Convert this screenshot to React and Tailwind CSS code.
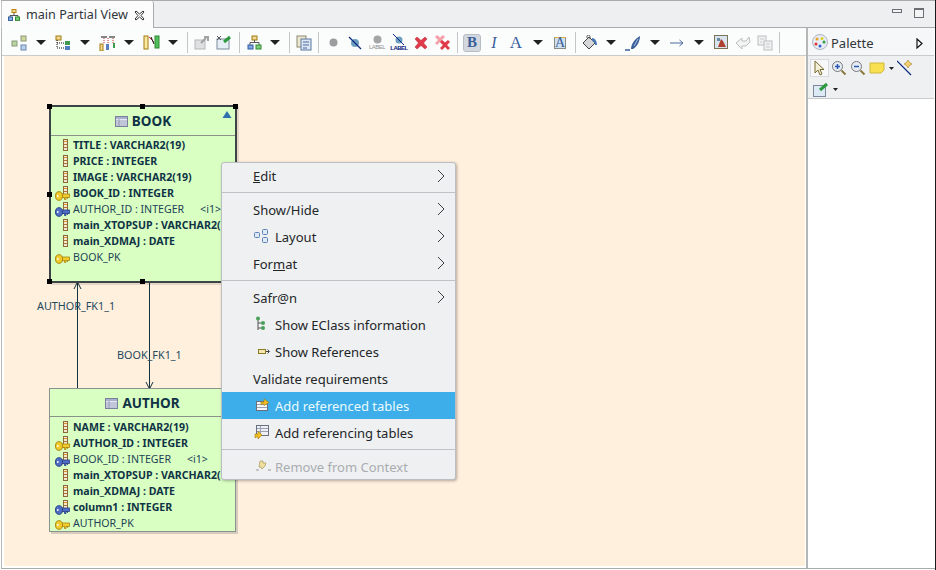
import React from "react";

const font = { fontFamily: '"Noto Sans", sans-serif' };
const serif = { fontFamily: '"Liberation Serif", serif' };
const sans = { fontFamily: '"Liberation Sans", sans-serif' };

function Caret({ className = "" }) {
  return (
    <div className={`w-[22px] h-[22px] flex items-center justify-center ${className}`}>
      <svg width="11" height="6" viewBox="0 0 11 6"><path d="M0 0h10L5 5z" fill="#222" /></svg>
    </div>
  );
}
function Sep({ w = "w-[7px]" }) {
  return (
    <div className={`${w} flex justify-center`}>
      <div className="w-px h-[21px] bg-[#c4c6c8]" />
    </div>
  );
}
function Btn({ children, active }) {
  return (
    <div className="w-[22px] h-[22px] flex items-center justify-center">
      {active ? (
        <div className="w-[18px] h-[18px] rounded-[3px] bg-[#d3d8de] border border-[#b7bdc4] flex items-center justify-center">{children}</div>
      ) : children}
    </div>
  );
}
const S = ({ children, w = 16, h = 16 }) => (
  <svg width={w} height={h} viewBox={`0 0 ${w} ${h}`} fill="none">{children}</svg>
);

function ColIcon() {
  return (
    <svg width="5" height="12" viewBox="0 0 5 12" className="shrink-0">
      <rect x="0.500" y="0.500" width="4" height="11" fill="#f2e9cf" stroke="#8a6a3a" />
      <path d="M1 2.500h3" stroke="#e0902a" />
      <path d="M1 5.500h3M1 8.500h3" stroke="#b0703a" />
    </svg>
  );
}
function Key({ color = "#f2cc2c", edge = "#a88510" }) {
  return (
    <svg width="15" height="10" viewBox="0 0 15 10">
      <rect x="6" y="3" width="8.500" height="3.500" fill={color} stroke={edge} strokeWidth="0.800" />
      <path d="M9.500 6.500v2h1.500v-2M12.500 6.500v1.500" fill={color} stroke={edge} strokeWidth="0.800" />
      <ellipse cx="4" cy="5" rx="3.500" ry="4.300" fill={color} stroke={edge} />
      <circle cx="2.800" cy="5" r="0.900" fill="#fff" />
    </svg>
  );
}
function RowIcon({ type }) {
  return (
    <div className="relative w-[19px] h-4 shrink-0">
      {type !== "pk" && (
        <div className={`absolute left-[9px] ${type === "col" ? "top-[1px]" : "top-0"}`}><ColIcon /></div>
      )}
      {type === "key" && (
        <div className="absolute left-[1px] top-[5px]"><Key /></div>
      )}
      {type === "pk" && (
        <div className="absolute left-[1px] top-[4px]"><Key /></div>
      )}
      {type === "fk" && (
        <div className="absolute left-[1px] top-[5px]"><Key color="#4f6fc4" edge="#27408a" /></div>
      )}
    </div>
  );
}
function Row({ type, text, bold, extra }) {
  return (
    <div className={`h-4 flex items-center whitespace-nowrap text-[10.6px] ${bold ? "text-[#0f3345]" : "text-[#1d4256]"}`}>
      <RowIcon type={type} />
      <span className={bold ? "font-bold" : ""}>{text}</span>
      {extra && <span className="ml-[16px]">{extra}</span>}
    </div>
  );
}
function TableGlyph() {
  return (
    <svg width="13" height="11" viewBox="0 0 13 11">
      <rect x="0.500" y="0.500" width="12" height="10" fill="#e6e9f4" stroke="#7a7f9a" />
      <rect x="1" y="1" width="11" height="2" fill="#a8b0d0" />
      <path d="M1 5h11M1 7h11M1 9h11M4 3v7" stroke="#8a90b0" strokeWidth="0.800" />
    </svg>
  );
}
function Handle({ className }) {
  return <div className={`absolute w-[5px] h-[5px] bg-black ${className}`} />;
}

function MenuItem({ label, icon, arrow, active, disabled, first, iconClass = "" }) {
  return (
    <div className={`${first ? "h-[26px]" : "h-[27px]"} flex items-center relative whitespace-nowrap text-[13px] pt-[2px] ${active ? "bg-[#3daee9] text-[#eafaff]" : disabled ? "text-[#a9adb1]" : "text-[#232629]"}`}>
      {icon ? (
        <>
          <div className={`absolute left-[31px] top-[5px] w-4 h-4 flex items-center justify-center ${iconClass}`}>{icon}</div>
          <span className="ml-[53px]">{label}</span>
        </>
      ) : (
        <span className="ml-[31px]">{label}</span>
      )}
      {arrow && (
        <svg className="absolute left-[215px] top-[6px]" width="8" height="14" viewBox="0 0 8 14" fill="none">
          <path d="M1 1l6 6-6 6" stroke="#3a3f44" strokeWidth="1" />
        </svg>
      )}
    </div>
  );
}
const MenuSep = () => <div className="h-px bg-[#bfc3c7] my-[3px]" />;

export default function App() {
  return (
    <div className="w-[936px] h-[570px] flex flex-col bg-white overflow-hidden border-r border-[#1a1a1a] pb-[1px] pl-[1px]" style={font}>
      {/* Tab strip */}
      <div className="h-[28px] flex bg-[#eeeff1] border-t border-b border-[#a9abad] shrink-0 relative">
        <div className="w-[153px] h-[27px] bg-[#fcfcfc] border-r border-[#a9abad] border-l border-l-[#c4c6c8] rounded-tr-[3px] flex items-center relative z-10 pt-[1px]">
          <svg className="ml-[6px]" width="12" height="12" viewBox="0 0 12 12" fill="none">
            <rect x="4" y="0.500" width="4" height="3" fill="#f0d890" stroke="#b8860b" />
            <path d="M6 4v2.500M2 8V6.500h8V8" stroke="#555" />
            <rect x="0.500" y="8" width="4" height="3.400" fill="#8fb4e0" stroke="#2f5d9e" />
            <rect x="7.500" y="8" width="4" height="3.400" fill="#7fcf7f" stroke="#2e8b2e" />
          </svg>
          <span className="ml-[6px] text-[12.6px] text-[#31363b]">main Partial View</span>
          <svg className="ml-[6px]" width="11" height="11" viewBox="0 0 11 11" fill="none">
            <path d="M1 2l1-1 3.500 3L9 1l1 1-3 3.500 3 3.500-1 1-3.500-3L2 10 1 9l3-3.500z" fill="#fff" stroke="#333" strokeWidth="1" />
          </svg>
        </div>
        <div className="flex-1 flex justify-end items-start pt-[7px] pr-[11px] gap-[12px]">
          <div className="w-[10px] h-[4px] border border-[#6b6f73] bg-[#f4f4f4] mt-[1px]" />
          <div className="w-[10px] h-[10px] border border-[#6b6f73] border-t-2 bg-[#f4f4f4]" />
        </div>
      </div>

      {/* Body */}
      <div className="flex-1 flex min-h-0 border-b border-[#a9abad]">
        {/* Editor column */}
        <div className="w-[807px] flex flex-col border-l border-[#b4b6b8] border-r-2 border-r-[#b4b6b8] shrink-0 pr-[1px]">
          <div className="h-[28px] bg-[#fbfcfc] border-b border-[#c9cbcd] flex items-center pl-[6px] pt-[2px] shrink-0 -mr-[1px]">
            <Btn>
              <S>
                <rect x="1" y="6" width="5" height="5" fill="#b7d39f" stroke="#8a9a7a" />
                <rect x="10" y="1" width="5" height="5" fill="#cfd79a" stroke="#8a9a7a" />
                <rect x="10" y="10" width="5" height="5" fill="#b9d2ee" stroke="#6a88aa" />
              </S>
            </Btn>
            <Caret />
            <Btn>
              <S>
                <rect x="1" y="1" width="5" height="4" fill="#f4d98e" stroke="#a07a10" />
                <path d="M2 5v8M2 8h8M2 13h8" stroke="#111" strokeDasharray="1 1" />
                <rect x="10" y="6" width="5" height="4" fill="#3f9a4f" />
                <rect x="10" y="11" width="5" height="4" fill="#4f7fc0" />
              </S>
            </Btn>
            <Caret />
            <Btn>
              <S w={17}>
                <path d="M2 2h6M10 2h6" stroke="#111" />
                <path d="M5 3v6M9 3v5M14 3v6" stroke="#d03030" strokeDasharray="1 1" />
                <rect x="1" y="9" width="3" height="7" fill="#f4d98e" stroke="#a07a10" />
                <rect x="7" y="9" width="3" height="6" fill="#5a7fc0" />
                <rect x="14" y="8" width="2" height="5" fill="#3f9a4f" />
              </S>
            </Btn>
            <Caret />
            <Btn>
              <S w={17}>
                <rect x="1" y="1" width="4" height="13" fill="#fbe9a0" stroke="#a07a10" />
                <rect x="12" y="1" width="4" height="12" fill="#50c060" stroke="#2e8b2e" />
                <path d="M6 2l5 5" stroke="#d03030" />
                <path d="M8 2l3 7" stroke="#111" />
              </S>
            </Btn>
            <Caret />
            <Sep />
            <Btn>
              <S>
                <rect x="1" y="5" width="10" height="9" fill="#dfe0e2" stroke="#b4b6b8" />
                <path d="M7 8l5-5M10 2h4v4" stroke="#a0a2a4" strokeWidth="2" />
              </S>
            </Btn>
            <Btn>
              <S>
                <rect x="1" y="4" width="12" height="10" fill="#e6eef6" stroke="#7a8a9a" />
                <path d="M1 1l4 4M5 1L1 5" stroke="#555" />
                <path d="M8 7l6-5" stroke="#2e9a3e" strokeWidth="3" />
              </S>
            </Btn>
            <Sep w="w-[8px]" />
            <Btn>
              <S w={15} h={15}>
                <rect x="5" y="1" width="5" height="4" fill="#f0d890" stroke="#a07a10" />
                <path d="M7.500 5v2.500M3 10V7.500h9V10" stroke="#555" />
                <rect x="1" y="10" width="5" height="4" fill="#7fa4e0" stroke="#2f5d9e" />
                <rect x="9" y="10" width="5" height="4" fill="#7fcf7f" stroke="#2e8b2e" />
              </S>
            </Btn>
            <Caret className="-ml-[1px]" />
            <Sep />
            <Btn>
              <S>
                <rect x="1" y="1" width="9" height="11" fill="#efe8d0" stroke="#8a8a70" />
                <rect x="5" y="4" width="10" height="11" fill="#dde6f4" stroke="#5a78a0" />
                <path d="M7 7h6M7 10h6M7 13h4" stroke="#4a6a9a" />
              </S>
            </Btn>
            <Sep />
            <Btn>
              <svg width="9" height="9"><circle cx="4.500" cy="4.500" r="4" fill="#9b9d9f" /></svg>
            </Btn>
            <Btn>
              <S w={14} h={14}>
                <circle cx="7" cy="7" r="4" fill="#6f9fc0" />
                <path d="M1 1l12 12" stroke="#0a2a80" strokeWidth="1.200" />
              </S>
            </Btn>
            <Btn>
              <div className="flex flex-col items-center">
                <svg width="9" height="9"><circle cx="4.500" cy="4.500" r="4" fill="#a3a5a7" /></svg>
                <span className="text-[6px] leading-[7px] tracking-[-0.5px] text-[#8f9193]" style={sans}>LABEL</span>
              </div>
            </Btn>
            <Btn>
              <div className="relative flex flex-col items-center">
                <svg width="14" height="11" viewBox="0 0 14 11">
                  <circle cx="7" cy="6" r="3.500" fill="#6f9fc0" />
                  <path d="M1 0l11 11" stroke="#0a2a80" />
                </svg>
                <span className="text-[6px] font-bold leading-[7px] tracking-[-0.5px] text-[#0a1a80]" style={sans}>LABEL</span>
              </div>
            </Btn>
            <Btn>
              <S w={14} h={14}>
                <path d="M3 1l4 3.500L11 1l2 2-3.500 4L13 11l-2 2-4-3.500L3 13l-2-2 3.500-4L1 3z" fill="#e0394a" stroke="#b82030" strokeWidth="0.500" />
              </S>
            </Btn>
            <Btn>
              <S w={16} h={16}>
                <path d="M2 0l3 2.500L8 0l2 2-3 3 3 3-2 2-3-3-3 3-2-2 3-3-3-3z" fill="#f4a0a8" />
                <path d="M7 5l3 2.500L13 5l2 2-3 3 3 3-2 2-3-3-3 3-2-2 3-3-3-3z" fill="#e0394a" />
              </S>
            </Btn>
            <Sep />
            <Btn active>
              <span className="text-[15px] font-bold text-[#3a5f9a] leading-none" style={serif}>B</span>
            </Btn>
            <Btn>
              <span className="text-[16px] italic text-[#3a5f9a] leading-none" style={serif}>I</span>
            </Btn>
            <Btn>
              <span className="text-[17px] text-[#3a5f9a] leading-none" style={serif}>A</span>
            </Btn>
            <Caret />
            <Btn>
              <div className="relative w-4 h-4">
                <div className="absolute left-[2px] top-[2px] w-3 h-3 bg-[#cfe0f0] border border-[#8a8a80] border-t-[#e0b040]" />
                <span className="absolute inset-0 text-[14px] text-[#3a5f9a] leading-4 text-center" style={serif}>A</span>
              </div>
            </Btn>
            <Sep w="w-[8px]" />
            <Btn>
              <S>
                <path d="M1 8l6-6 6 6-6 6z" fill="#d4d6d8" stroke="#444" />
                <path d="M5 3V1.500a1.500 1.500 0 013 0V4" stroke="#555" />
                <path d="M10 3c3 0 5 3 5 7l-2 0c0-2-1-4-3-4z" fill="#4a7ab8" />
              </S>
            </Btn>
            <Caret className="-ml-[1px]" />
            <Btn>
              <S>
                <path d="M6 14c0-5 4-10 9-13 0 5-3 11-7 13z" fill="#3a5f9a" />
                <path d="M9 11l4-7" stroke="#a8c0e0" />
                <path d="M0 15h5" stroke="#3a5f9a" strokeWidth="1.500" />
              </S>
            </Btn>
            <Caret />
            <Btn>
              <S w={14} h={8}><path d="M0 4h13M9.500 1l3.500 3-3.500 3" stroke="#4a6a9a" /></S>
            </Btn>
            <Caret />
            <Btn>
              <S w={15} h={15}>
                <rect x="0.500" y="0.500" width="13" height="13" fill="#d8e4ee" stroke="#7c7256" />
                <path d="M4 12l3-8 2 2 3 6z" fill="#b04030" />
                <path d="M3 3h3v3H3z" fill="#6a8aa0" />
              </S>
            </Btn>
            <Btn>
              <S>
                <path d="M1 8l6-5v3h4l3-4 1 5-4 4H7v3z" fill="#f3f3f3" stroke="#bbbdbf" />
              </S>
            </Btn>
            <Btn>
              <S>
                <rect x="1" y="1" width="8" height="9" fill="#f1f1f1" stroke="#bbbdbf" />
                <rect x="7" y="6" width="8" height="9" fill="#f1f1f1" stroke="#bbbdbf" />
                <path d="M3 4h4M3 7h2M9 9h4M9 12h4" stroke="#c8cacc" />
              </S>
            </Btn>
            <Sep />
          </div>

          {/* Canvas */}
          <div className="flex-1 relative bg-[#ffefdd] overflow-hidden ml-[2px] mb-[2px]">
            {/* connectors */}
            <svg className="absolute left-0 top-0" width="802" height="510" fill="none">
              <path d="M73.500 334V226" stroke="#143240" />
              <path d="M70 233l3.500-7 3.500 7" stroke="#143240" />
              <path d="M145.500 226V333" stroke="#143240" />
              <path d="M142 326l3.500 7 3.500-7" stroke="#143240" />
            </svg>
            <div className="absolute left-[33px] top-[242px] text-[10.8px] text-[#234a5c] whitespace-nowrap">AUTHOR_FK1_1</div>
            <div className="absolute left-[113px] top-[291px] text-[10.8px] text-[#234a5c] whitespace-nowrap">BOOK_FK1_1</div>

            {/* BOOK */}
            <div className="absolute left-[45px] top-[49px] w-[188px] h-[178px] bg-[#d9ffc3] border-2 border-[#3c4446] shadow-[2px_2px_0_rgba(0,0,0,0.1)]">
              <div className="h-[29px] border-b border-[#8a908a] flex items-center justify-center gap-[4px] relative">
                <TableGlyph />
                <span className="font-bold text-[13.5px] text-[#0f3345]">BOOK</span>
                <svg className="absolute right-[3px] top-[4px]" width="10" height="8" viewBox="0 0 10 8"><path d="M5 0l4.500 7H.500z" fill="#2f6fb0" /></svg>
              </div>
              <div className="pl-[3px] pt-[2px]">
                <Row type="col" bold text="TITLE : VARCHAR2(19)" />
                <Row type="col" bold text="PRICE : INTEGER" />
                <Row type="col" bold text="IMAGE : VARCHAR2(19)" />
                <Row type="key" bold text="BOOK_ID : INTEGER" />
                <Row type="fk" text="AUTHOR_ID : INTEGER" extra="<i1>" />
                <Row type="col" bold text="main_XTOPSUP : VARCHAR2(" />
                <Row type="col" bold text="main_XDMAJ : DATE" />
                <Row type="pk" text="BOOK_PK" />
              </div>
              <Handle className="-left-[4px] -top-[3px]" />
              <Handle className="left-[89px] -top-[3px]" />
              <Handle className="-right-[3px] -top-[3px]" />
              <Handle className="-left-[4px] top-[85px]" />
              <Handle className="-left-[4px] -bottom-[3px]" />
              <Handle className="left-[89px] -bottom-[3px]" />
              <Handle className="-right-[3px] -bottom-[3px]" />
            </div>

            {/* AUTHOR */}
            <div className="absolute left-[45px] top-[332px] w-[187px] h-[144px] bg-[#d9ffc3] border border-[#8a9290] shadow-[2px_2px_0_rgba(0,0,0,0.15)]">
              <div className="h-[28px] border-b border-[#8a908a] flex items-center justify-center gap-[4px] pt-[2px]">
                <TableGlyph />
                <span className="font-bold text-[13.5px] text-[#0f3345]">AUTHOR</span>
              </div>
              <div className="pl-[4px] pt-[3px]">
                <Row type="col" bold text="NAME : VARCHAR2(19)" />
                <Row type="key" bold text="AUTHOR_ID : INTEGER" />
                <Row type="fk" text="BOOK_ID : INTEGER" extra="<i1>" />
                <Row type="col" bold text="main_XTOPSUP : VARCHAR2(" />
                <Row type="col" bold text="main_XDMAJ : DATE" />
                <Row type="fk" bold text="column1 : INTEGER" />
                <Row type="pk" text="AUTHOR_PK" />
              </div>
            </div>

            {/* Context menu */}
            <div className="absolute left-[217px] top-[106px] w-[235px] h-[318px] bg-[#eff0f1] border border-[#bcbfc2] rounded-[3px] shadow-[1px_1px_3px_rgba(0,0,0,0.3)]">
              <MenuItem first label={<><span className="underline">E</span>dit</>} arrow />
              <MenuSep />
              <MenuItem label="Show/Hide" arrow />
              <MenuItem
                label="Layout"
                arrow
                icon={
                  <svg width="14" height="14" viewBox="0 0 14 14" fill="none" stroke="#5a82b4">
                    <rect x="0.500" y="3.500" width="5" height="5" rx="1" fill="#dfe8f4" />
                    <rect x="8.500" y="0.500" width="5" height="5" rx="1" fill="#dfe8f4" />
                    <rect x="8.500" y="8.500" width="5" height="5" rx="1" fill="#dfe8f4" />
                  </svg>
                }
              />
              <MenuItem label={<>For<span className="underline">m</span>at</>} arrow />
              <MenuSep />
              <MenuItem label="Safr@n" arrow />
              <MenuItem
                label="Show EClass information"
                icon={
                  <svg width="12" height="16" viewBox="0 0 12 16" fill="none">
                    <path d="M3 3v11M3 7h4M3 12h4" stroke="#555" />
                    <circle cx="3" cy="2.500" r="2" fill="#4aa05a" />
                    <circle cx="8" cy="7" r="2" fill="#4aa05a" />
                    <circle cx="8" cy="12" r="2" fill="#4aa05a" />
                  </svg>
                }
              />
              <MenuItem
                label="Show References"
                iconClass="ml-[3px]"
                icon={
                  <svg width="12" height="7" viewBox="0 0 12 7" fill="none">
                    <rect x="0.500" y="1.500" width="7" height="4" fill="#f4e8b0" stroke="#8a7a20" />
                    <path d="M8 3.500h3M9.500 1.500l2 2-2 2" stroke="#444" />
                  </svg>
                }
              />
              <MenuItem label="Validate requirements" />
              <MenuItem
                active
                label="Add referenced tables"
                iconClass="ml-[2px]"
                icon={
                  <svg width="14" height="14" viewBox="0 0 14 14" fill="none">
                    <rect x="0.500" y="3.500" width="11" height="9" fill="#f4f6fa" stroke="#6a7080" />
                    <path d="M1 6.500h10M1 9.500h10" stroke="#9aa0b0" />
                    <path d="M5 7V4h3V1l5 3.500-5 3V6H6z" fill="#f4c020" stroke="#a07a10" strokeWidth="0.600" />
                  </svg>
                }
              />
              <MenuItem
                label="Add referencing tables"
                icon={
                  <svg width="15" height="15" viewBox="0 0 15 15" fill="none">
                    <rect x="2.500" y="0.500" width="12" height="10" fill="#eef0f6" stroke="#6a7080" />
                    <path d="M3 3.500h11M3 6.500h11M6.500 1v9" stroke="#9aa0b0" />
                    <path d="M1 13V9h3V6l4 4-4 4v-2H2z" fill="#f4c020" stroke="#a07a10" strokeWidth="0.600" />
                  </svg>
                }
              />
              <MenuSep />
              <MenuItem
                disabled
                label="Remove from Context"
                iconClass="ml-[2px]"
                icon={
                  <svg width="15" height="12" viewBox="0 0 15 12" fill="none">
                    <path d="M4 1h3v2h3l-1 3 -3 3-1-2H3z" fill="#efe0a0" stroke="#a8985a" strokeWidth="0.700" />
                    <path d="M0 10h3M12 10h3" stroke="#999" />
                  </svg>
                }
              />
            </div>
          </div>
        </div>

        {/* Palette */}
        <div className="flex-1 flex flex-col bg-white">
          <div className="h-[28px] w-[126px] bg-[#f6f7f8] border-b border-[#c9cbcd] flex items-center pl-[4px] pt-[5px] shrink-0">
            <svg width="16" height="16" viewBox="0 0 16 16" className="-mt-[4px]">
              <circle cx="8" cy="8" r="7.500" fill="#e8ecf4" stroke="#b0b4c0" />
              <circle cx="5" cy="5" r="1.500" fill="#e8a020" />
              <circle cx="10" cy="4.500" r="1.500" fill="#e0d020" />
              <circle cx="12" cy="8" r="1.500" fill="#30a040" />
              <circle cx="4" cy="10" r="1.500" fill="#e03030" />
              <circle cx="8" cy="12" r="1.500" fill="#3060d0" />
            </svg>
            <span className="ml-[3px] text-[13px] text-[#31363b]">Palette</span>
            <svg className="ml-[42px] -mt-[2px]" width="7" height="11" viewBox="0 0 7 11"><path d="M1 1l5 4.500-5 4.500z" fill="#fff" stroke="#111" strokeWidth="1.200" /></svg>
          </div>
          <div className="bg-[#eff0f1] border-b border-[#c9cbcd] h-[43px] w-[126px] pt-[2px] pl-[2px] shrink-0">
            <div className="flex items-center h-[20px]">
              <div className="w-[19px] h-[18px] bg-[#f8f8f8] border border-[#d8dade] flex items-center justify-center">
                <svg width="11" height="16" viewBox="0 0 11 16"><path d="M1 1v12l3-3 2 5 2-1-2-4.500h4z" fill="#f4f1d8" stroke="#7a6a30" /></svg>
              </div>
              <svg className="ml-[2px]" width="16" height="16" viewBox="0 0 16 16" fill="none">
                <circle cx="6.500" cy="6.500" r="5" fill="#e6ecf4" stroke="#77797b" />
                <path d="M4 6.500h5M6.500 4v5" stroke="#2a55b0" strokeWidth="1.500" />
                <path d="M10.500 10.500l4 4" stroke="#8a7a40" strokeWidth="2" />
              </svg>
              <svg className="ml-[3px]" width="16" height="16" viewBox="0 0 16 16" fill="none">
                <circle cx="6.500" cy="6.500" r="5" fill="#e6ecf4" stroke="#77797b" />
                <path d="M4 6.500h5" stroke="#2a55b0" strokeWidth="1.500" />
                <path d="M10.500 10.500l4 4" stroke="#8a7a40" strokeWidth="2" />
              </svg>
              <svg className="ml-[3px]" width="16" height="12" viewBox="0 0 16 12"><path d="M1 1h14v7l-3 3H1z" fill="#f8e050" stroke="#d0b840" /></svg>
              <svg className="ml-[4px]" width="5" height="3" viewBox="0 0 5 3"><path d="M0 0h5L2.500 3z" fill="#222" /></svg>
              <svg className="ml-[3px]" width="16" height="16" viewBox="0 0 16 16" fill="none">
                <path d="M0 1l14 14" stroke="#0a2a80" strokeWidth="1.200" />
                <path d="M11 0l1.500 2.500L15 4l-2.500 1.500L11 8 9.500 5.500 7 4l2.500-1.500z" fill="#f4d070" stroke="#a08020" strokeWidth="0.600" />
              </svg>
            </div>
            <div className="flex items-center h-[20px] mt-[1px] pl-[3px]">
              <svg width="16" height="16" viewBox="0 0 16 16" fill="none">
                <rect x="0.500" y="4.500" width="12" height="11" fill="#dceaf6" stroke="#7a8a9a" />
                <path d="M7 9l7-6" stroke="#2e9a3e" strokeWidth="3" />
              </svg>
              <svg className="ml-[4px]" width="5" height="3" viewBox="0 0 5 3"><path d="M0 0h5L2.500 3z" fill="#222" /></svg>
            </div>
          </div>
        </div>
      </div>
    </div>
  );
}
